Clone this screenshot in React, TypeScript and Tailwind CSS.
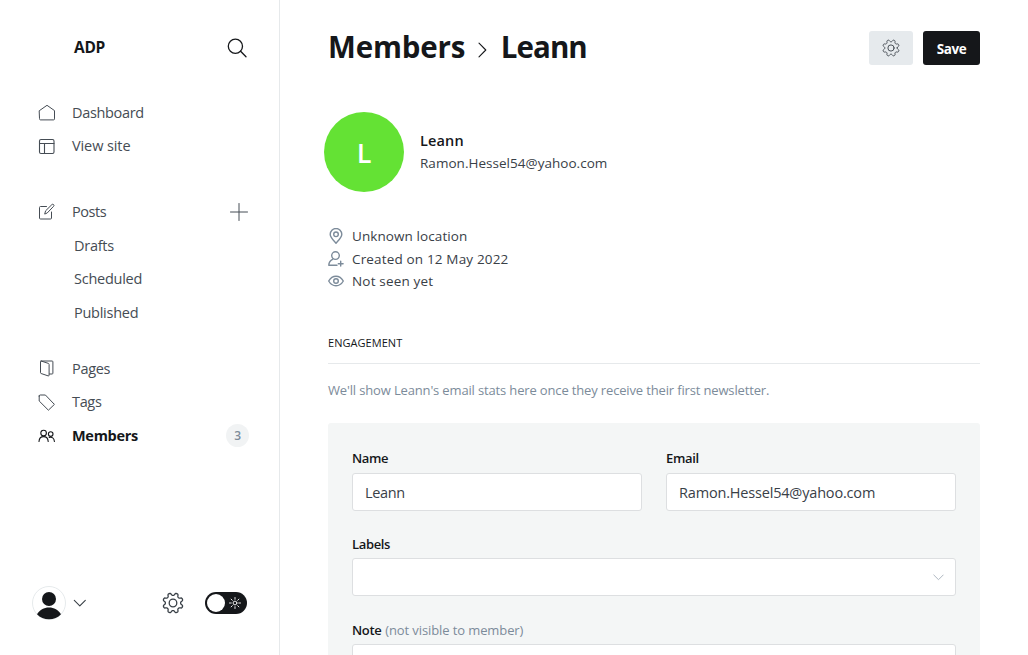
import React from "react";

type IconProps = { className?: string; children: React.ReactNode; box?: string; sw?: number };

function Icon({ className = "", children, box = "0 0 16 16", sw = 1 }: IconProps) {
  return (
    <svg viewBox={box} className={`shrink-0 ${className}`} fill="none" stroke="currentColor" strokeWidth={sw} strokeLinecap="round" strokeLinejoin="round">
      {children}
    </svg>
  );
}

function gearPath(center: number, radius: number, depth: number) {
  const steps = 160;
  const points = Array.from({ length: steps }, (_, i) => {
    const a = (i / steps) * Math.PI * 2;
    const wave = Math.tanh(-1.8 * Math.cos(8 * a)) / Math.tanh(1.8);
    const r = radius + depth * wave;
    return `${(center + r * Math.cos(a)).toFixed(2)} ${(center + r * Math.sin(a)).toFixed(2)}`;
  });
  return `M${points.join("L")}Z`;
}

function Gear({ className = "", sw = 1.1 }: { className?: string; sw?: number }) {
  return (
    <Icon className={className} box="0 0 22 22" sw={sw}>
      <path d={gearPath(11, 8.9, 1.25)} />
      <circle cx="11" cy="11" r="3.8" />
    </Icon>
  );
}

function NavItem({ icon, label, active = false, tracking = "tracking-[-0.34px]", children }: { icon: React.ReactNode; label: string; active?: boolean; tracking?: string; children?: React.ReactNode }) {
  return (
    <a className={`flex h-[33.5px] items-center pl-[38px] pr-[30px] ${active ? "font-bold tracking-[-0.3px] text-[#15171a]" : `${tracking} text-[#454c54]`}`}>
      <span className="mr-[16px] flex w-[18px] shrink-0">{icon}</span>
      <span className="flex-1">{label}</span>
      {children}
    </a>
  );
}

function SubItem({ label }: { label: string }) {
  return <a className="flex h-[33.5px] items-center pt-px pl-[74px] tracking-[-0.26px] text-[#454c54]">{label}</a>;
}

function Sidebar() {
  return (
    <nav className="flex h-full w-[280px] shrink-0 flex-col border-r border-[#e6e9eb] text-[14.5px]">
      <header className="flex h-[96px] items-center justify-between pl-[74px] pr-[32px]">
        <span className="text-[15.5px] font-bold tracking-[-0.3px] text-[#15171a]">ADP</span>
        <Icon className="size-5 text-[#15171a]" box="0 0 20 20" sw={1.3}>
          <circle cx="8.4" cy="8.3" r="7.1" />
          <path d="M13.6 13.3L19 18.7" />
        </Icon>
      </header>

      <div className="mb-[32px]">
        <NavItem label="Dashboard" icon={<Icon className="size-[17px]" box="0 0 17 17"><path d="M1.5 6.6L9 1.3l7.500 5.300v8.300q0 1-1 1H2.500q-1 0-1-1Z" /></Icon>} />
        <NavItem label="View site" tracking="tracking-[-0.1px]" icon={<Icon className="size-[17px]" box="0 0 17 17" sw={1.1}><rect x="1.5" y="1.5" width="14.500" height="14" rx="1.5" /><path d="M1.5 5.500h14.500M6.500 5.500v10" /></Icon>} />
      </div>

      <div className="mb-[23px]">
        <NavItem label="Posts" tracking="tracking-[-0.45px]" icon={<Icon className="size-[17px]" box="0 0 17 17"><path d="M8.5 3.500h-6q-1 0-1 1v10.500q0 1 1 1H12.500q1 0 1-1V9M6.800 10.700l.8-2.900 6.300-6.200q.9-.8 1.700 0t0 1.700L9.500 9.700Z" /></Icon>}>
          <Icon className="mr-px size-[18px]" box="0 0 18 18"><path d="M9 .5v17M.5 9h17" /></Icon>
        </NavItem>
        <SubItem label="Drafts" />
        <SubItem label="Scheduled" />
        <SubItem label="Published" />
      </div>

      <div>
        <NavItem label="Pages" tracking="tracking-[-0.3px]" icon={<Icon className="size-[17px]" box="0 0 17 17"><path d="M2.900 1h11.200q.8 0 .8.800v11.400q0 .8-.8.800h-2.600M2.900 1q-.4 0-.4.700v11q0 .6.600.800l7.100 2.400q.9.200.9-.7V4.500q0-.8-.7-1.100L3.400 1.100" /></Icon>} />
        <NavItem label="Tags" icon={<Icon className="size-[17px]" box="0 0 17 17"><path d="M1.200 2v5L10.400 16.200 16.400 10.400 7.400 1H2.200q-1 0-1 1Z" /></Icon>} />
        <NavItem active label="Members" icon={<Icon className="size-[17px]" box="0 0 17 17" sw={1.1}><circle cx="5.600" cy="6" r="2.800" /><circle cx="12.700" cy="7.100" r="2.300" /><path d="M1 14.500c.2-3 2-4.900 4.600-4.900s4.400 1.900 4.600 4.900M11.200 10.400c2.800-.8 5 .8 5.200 4.100" /></Icon>}>
          <span className="flex size-[23px] items-center justify-center rounded-full bg-[#f1f3f4] pt-px text-[12px] font-semibold text-[#7c8b9a]">3</span>
        </NavItem>
      </div>

      <footer className="mt-auto mb-[35px] flex h-[34px] items-center pl-[32px] pr-[32px]">
        <svg viewBox="0 0 34 34" className="size-[34px] shrink-0">
          <circle cx="17" cy="17" r="16.5" fill="#fff" stroke="#e6eaec" />
          <circle cx="17" cy="13" r="7" fill="#15171a" />
          <path d="M5 28.300c2.500-4.300 7-6.800 12-6.800s9.500 2.500 12 6.800c-3 3.300-7.300 5-12 5s-9-1.700-12-5Z" fill="#15171a" />
        </svg>
        <Icon className="ml-[7px] h-[8px] w-[13px] text-[#394047]" box="0 0 13 8" sw={1.1}><path d="M1.300 1.300l5.500 5.500L12.300 1.300" /></Icon>
        <Gear className="ml-auto size-[22px] text-[#394047]" sw={1.3} />
        <div className="ml-[21px] flex h-[22px] w-[42px] items-center justify-between rounded-full bg-[#15171a] pl-[2px] pr-[6px]">
          <span className="size-[18px] rounded-full bg-white" />
          <Icon className="size-[12px] text-white" box="0 0 12 12" sw={0.9}>
            <circle cx="6" cy="6" r="1.9" />
            <path d="M6 .5v1.800M6 9.700v1.800M.5 6h1.800M9.700 6h1.800M2.100 2.100l1.200 1.200M8.700 8.700l1.200 1.200M2.100 9.900l1.200-1.200M8.700 3.300l1.200-1.200" />
          </Icon>
        </div>
      </footer>
    </nav>
  );
}

const label = "text-[13px] leading-[20px] font-semibold tracking-[-0.35px] text-[#15171a]";
const field = "flex h-[38px] items-center rounded-[3px] border border-[#dddfe1] bg-white px-3 pt-[2px] text-[14.5px] text-[#394047]";

export default function App() {
  return (
    <div className="flex h-screen overflow-hidden bg-white font-['Open_Sans',sans-serif]">
      <Sidebar />
      <main className="flex min-w-0 flex-1 flex-col pl-[48px] pr-[48px]">
        <header className="flex h-[96px] shrink-0 items-center">
          <h1 className="-mt-[2px] flex flex-1 items-center text-[29.5px] font-bold text-[#15171a]">
            <span className="tracking-[-0.15px]">Members</span>
            <Icon className="mt-[5px] ml-[13px] mr-[13.5px] h-[16px] w-[9px]" box="0 0 9 16" sw={1.1}><path d="M1 1.200l6.800 6.800L1 14.800" /></Icon>
            <span className="tracking-[-0.95px]">Leann</span>
          </h1>
          <button className="mr-[10px] flex h-[34px] w-[44px] items-center justify-center rounded-[3px] bg-[#e6eaed] text-[#394047]">
            <Gear className="size-[18px]" sw={1.1} />
          </button>
          <button className="h-[34px] w-[57px] rounded-[3px] bg-[#15171a] pt-[2px] text-[13.5px] font-bold tracking-[-0.45px] text-white">Save</button>
        </header>

        <section className="mt-4 -ml-1 flex h-20 shrink-0 items-center">
          <div className="flex size-20 items-center justify-center rounded-full bg-[#64e234] pt-[2px] text-[27px] font-semibold text-white">L</div>
          <div className="ml-4">
            <h3 className="text-[14.5px] leading-[22px] font-semibold tracking-[0.15px] text-[#15171a]">Leann</h3>
            <p className="text-[13.5px] leading-[22px] tracking-[0.03px] text-[#394047]">Ramon.Hessel54@yahoo.com</p>
          </div>
        </section>

        <section className="mt-[33px] shrink-0 text-[13.5px] leading-[22.5px] tracking-[0.09px] text-[#394047]">
          <p className="flex items-center">
            <Icon className="mr-2 size-4 text-[#7c8b9a]" sw={1.4}><path d="M8 15.200C5 12 2.200 9.500 2.200 6.300a5.800 5.800 0 0 1 11.600 0C13.800 9.500 11 12 8 15.200Z" /><circle cx="8" cy="6.300" r="2.300" /></Icon>
            Unknown location
          </p>
          <p className="flex items-center">
            <Icon className="mr-2 size-4 text-[#7c8b9a]" sw={1.4}><circle cx="7.500" cy="4.600" r="3.800" /><path d="M9 14.300H.8c0-2.800 1-4.500 3.700-6M10.300 12.700h4.800M12.700 10.300v4.800" /></Icon>
            <span className="tracking-[0.16px]">Created on 12 May 2022</span>
          </p>
          <p className="flex items-center">
            <Icon className="mr-2 size-4 text-[#7c8b9a]" sw={1.4}><path d="M.7 8C2.400 5 5 3.200 8 3.200S13.600 5 15.300 8C13.600 11 11 12.800 8 12.800S2.400 11 .7 8Z" /><circle cx="8" cy="8" r="2.300" /></Icon>
            <span className="tracking-[0.18px]">Not seen yet</span>
          </p>
        </section>

        <h4 className="mt-[40px] h-[31px] shrink-0 border-b border-[#e6e9eb] text-[11px] leading-[20px] font-medium tracking-[0.05px] text-[#15171a]">ENGAGEMENT</h4>
        <p className="mt-[15px] shrink-0 text-[13px] leading-[22px] tracking-[-0.15px] whitespace-nowrap text-[#7c8b9a]">
          We'll show Leann's email stats here once they receive their first newsletter.
        </p>

        <section className="mt-[22px] flex h-[400px] shrink-0 flex-col rounded-[3px] bg-[#f4f6f6] px-6 pt-[25px]">
          <div className="grid grid-cols-2 gap-6">
            <div>
              <div className={label}>Name</div>
              <div className={`mt-[5px] tracking-[-0.35px] ${field}`}>Leann</div>
            </div>
            <div>
              <div className={label}>Email</div>
              <div className={`mt-[5px] tracking-[-0.18px] ${field}`}>Ramon.Hessel54@yahoo.com</div>
            </div>
          </div>
          <div className={`mt-[23px] ${label}`}>Labels</div>
          <div className={`mt-[4px] justify-end ${field}`}>
            <Icon className="-mr-px h-[7px] w-[11px] text-[#aeb7c1]" box="0 0 11 7"><path d="M.8 1l4.700 4.700L10.200 1" /></Icon>
          </div>
          <div className={`mt-[24px] ${label}`}>
            Note <span className="ml-[0.8px] font-normal tracking-[-0.1px] text-[#7c8b9a]">(not visible to member)</span>
          </div>
          <div className="mt-[4px] h-[120px] rounded-[3px] border border-[#dddfe1] bg-white" />
        </section>
      </main>
    </div>
  );
}
